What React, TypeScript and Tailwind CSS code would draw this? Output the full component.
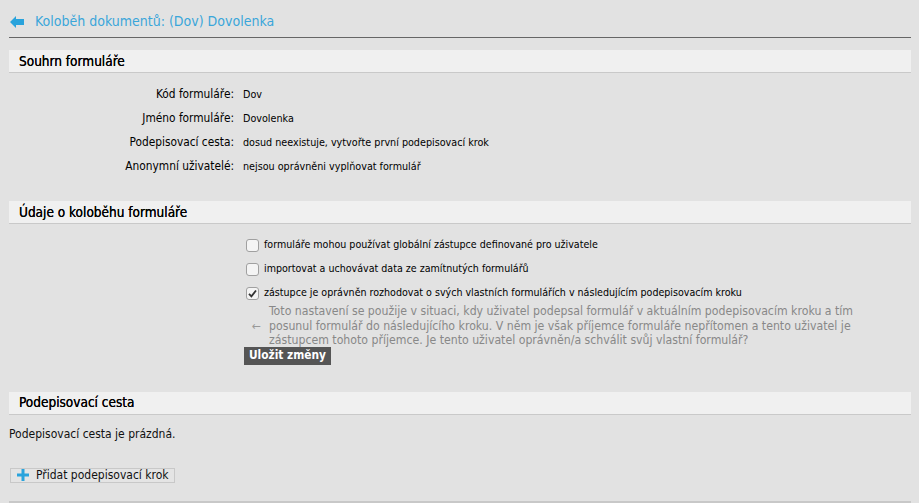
import React from "react";

const F = { fontFamily: '"DejaVu Sans Condensed", "DejaVu Sans", sans-serif' };

function SectionHeader({ title }: { title: string }) {
  return (
    <div className="h-[23px] bg-[#f0f0f0] border-b border-[#c9c9c9] pl-[10px] flex items-center text-[13.5px] text-black font-normal [text-shadow:0_0_0.3px_#000]">
      {title}
    </div>
  );
}

function Checkbox({ checked }: { checked?: boolean }) {
  return (
    <span className="w-[13px] h-[13px] rounded-[3px] border border-[#a0a0a0] bg-[#f4f4f4] flex items-center justify-center shrink-0">
      {checked && (
        <svg width="9" height="9" viewBox="0 0 9 9">
          <path d="M1 4.8 L3.4 7.3 L8 1.5" stroke="#333" strokeWidth="1.8" fill="none" />
        </svg>
      )}
    </span>
  );
}

export default function App() {
  const rows: [string, string][] = [
    ["Kód formuláře:", "Dov"],
    ["Jméno formuláře:", "Dovolenka"],
    ["Podepisovací cesta:", "dosud neexistuje, vytvořte první podepisovací krok"],
    ["Anonymní uživatelé:", "nejsou oprávněni vyplňovat formulář"],
  ];
  return (
    <div className="w-[919px] h-[503px] bg-[#e2e2e2] overflow-hidden" style={F}>
      <div className="px-[9px] pr-[8px]">
        <div className="h-[38px] flex items-center gap-[11px] pl-[1px] pt-[6px] border-b border-[#666]">
          <svg width="14" height="12" viewBox="0 0 14 12">
            <path d="M0 6 L6 0 L6 3 L14 3 L14 9 L6 9 L6 12 Z" fill="#29a3dc" />
          </svg>
          <span className="text-[14px] text-[#3aa6da]">Koloběh dokumentů: (Dov) Dovolenka</span>
        </div>

        <div className="mt-[12px]">
          <SectionHeader title="Souhrn formuláře" />
          <div className="pt-[10px] flex flex-col text-black">
            {rows.map(([l, v]) => (
              <div key={l} className="h-[24px] flex items-center">
                <div className="w-[225px] text-right text-[11.8px]">{l}</div>
                <div className="pl-[9px] text-[10.7px]">{v}</div>
              </div>
            ))}
          </div>
        </div>

        <div className="mt-[22px]">
          <SectionHeader title="Údaje o koloběhu formuláře" />
          <div className="pl-[237px] pt-[9px] text-[10.6px] text-black">
            <div className="h-[24px] flex items-center gap-[5px]">
              <Checkbox />
              <span>formuláře mohou používat globální zástupce definované pro uživatele</span>
            </div>
            <div className="h-[24px] flex items-center gap-[5px]">
              <Checkbox />
              <span>importovat a uchovávat data ze zamítnutých formulářů</span>
            </div>
            <div className="h-[24px] flex items-center gap-[5px]">
              <Checkbox checked />
              <span>zástupce je oprávněn rozhodovat o svých vlastních formulářích v následujícím podepisovacím kroku</span>
            </div>
            <div className="flex items-center -mt-[1px]">
              <span className="w-[23px] pl-[6px] text-[12px] text-[#999]">←</span>
              <p className="text-[12.2px] leading-[14.5px] text-[#888] w-[600px]">
                Toto nastavení se použije v situaci, kdy uživatel podepsal formulář v aktuálním podepisovacím kroku a tím posunul formulář do následujícího kroku. V něm je však příjemce formuláře nepřítomen a tento uživatel je zástupcem tohoto příjemce. Je tento uživatel oprávněn/a schválit svůj vlastní formulář?
              </p>
            </div>
            <button className="-mt-[1px] -ml-[2px] h-[18px] px-[5px] bg-[#555] text-white text-[11.8px] font-bold flex items-center">
              Uložit změny
            </button>
          </div>
        </div>

        <div className="mt-[27px]">
          <SectionHeader title="Podepisovací cesta" />
          <div className="pt-[10px] text-[12px] text-[#111]">Podepisovací cesta je prázdná.</div>
          <div className="mt-[25px] ml-[1px] flex">
            <button className="h-[15px] pl-[6px] pr-[5px] border border-[#c8c8c8] bg-[#e4e4e4] flex items-center gap-[7px] text-[12px] text-[#111]">
              <svg width="12" height="12" viewBox="0 0 12 12">
                <path d="M4.5 0 H7.5 V4.5 H12 V7.5 H7.5 V12 H4.5 V7.5 H0 V4.5 H4.5 Z" fill="#29a3dc" />
              </svg>
              Přidat podepisovací krok
            </button>
          </div>
          <div className="mt-[18px] border-t-2 border-[#c8c8c8]" />
        </div>
      </div>
    </div>
  );
}
